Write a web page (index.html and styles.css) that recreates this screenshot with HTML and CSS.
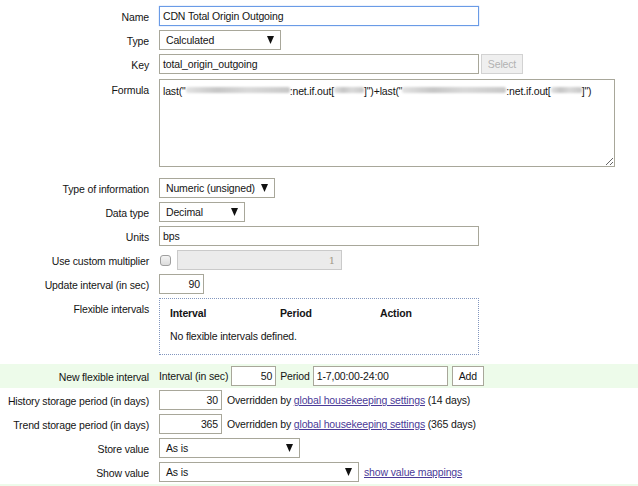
FILE: index.html
```html
<!DOCTYPE html>
<html>
<head>
<meta charset="utf-8">
<link rel="stylesheet" href="styles.css">
</head>
<body>
<form class="form">
  <div class="row">
    <div class="lbl">Name</div>
    <div class="field"><div class="input focus w320">CDN Total Origin Outgoing</div></div>
  </div>
  <div class="row">
    <div class="lbl">Type</div>
    <div class="field"><div class="select w122"><span>Calculated</span><svg class="arrow" width="7" height="8" viewBox="0 0 7 8"><polygon points="0,0 7,0 3.5,8" fill="#111"/></svg></div></div>
  </div>
  <div class="row">
    <div class="lbl">Key</div>
    <div class="field"><div class="input w320">total_origin_outgoing</div><div class="btn disabled">Select</div></div>
  </div>
  <div class="row row-formula">
    <div class="lbl">Formula</div>
    <div class="field"><div class="textarea">last("<span class="blur b106"></span>:net.if.out[<span class="blur b30"></span>]")+last("<span class="blur b106"></span>:net.if.out[<span class="blur b31"></span>]")</div></div>
  </div>
  <div class="row">
    <div class="lbl">Type of information</div>
    <div class="field"><div class="select w116"><span>Numeric (unsigned)</span><svg class="arrow" width="7" height="8" viewBox="0 0 7 8"><polygon points="0,0 7,0 3.5,8" fill="#111"/></svg></div></div>
  </div>
  <div class="row">
    <div class="lbl">Data type</div>
    <div class="field"><div class="select w86"><span>Decimal</span><svg class="arrow" width="7" height="8" viewBox="0 0 7 8"><polygon points="0,0 7,0 3.5,8" fill="#111"/></svg></div></div>
  </div>
  <div class="row">
    <div class="lbl">Units</div>
    <div class="field"><div class="input w320">bps</div></div>
  </div>
  <div class="row">
    <div class="lbl">Use custom multiplier</div>
    <div class="field"><span class="checkbox"></span><div class="input num inactive w165">1</div></div>
  </div>
  <div class="row">
    <div class="lbl">Update interval (in sec)</div>
    <div class="field"><div class="input num w45">90</div></div>
  </div>
  <div class="row row-flex">
    <div class="lbl">Flexible intervals</div>
    <div class="field">
      <div class="flexbox">
        <div class="fx-head"><span class="fx-col c1">Interval</span><span class="fx-col c2">Period</span><span class="fx-col">Action</span></div>
        <div class="fx-body">No flexible intervals defined.</div>
      </div>
    </div>
  </div>
  <div class="row green row-newflex">
    <div class="lbl">New flexible interval</div>
    <div class="field">
      <span class="txt">Interval (in sec)</span>
      <div class="input num w45 ml3">50</div>
      <span class="txt ml4">Period</span>
      <div class="input w135 ml3">1-7,00:00-24:00</div>
      <div class="btn ml4">Add</div>
    </div>
  </div>
  <div class="row">
    <div class="lbl">History storage period (in days)</div>
    <div class="field"><div class="input num w63">30</div><span class="txt ml5">Overridden by <a class="link">global housekeeping settings</a> (14 days)</span></div>
  </div>
  <div class="row">
    <div class="lbl">Trend storage period (in days)</div>
    <div class="field"><div class="input num w63">365</div><span class="txt ml5">Overridden by <a class="link">global housekeeping settings</a> (365 days)</span></div>
  </div>
  <div class="row">
    <div class="lbl">Store value</div>
    <div class="field"><div class="select w141"><span>As is</span><svg class="arrow" width="7" height="8" viewBox="0 0 7 8"><polygon points="0,0 7,0 3.5,8" fill="#111"/></svg></div></div>
  </div>
  <div class="row">
    <div class="lbl">Show value</div>
    <div class="field"><div class="select w200"><span>As is</span><svg class="arrow" width="7" height="8" viewBox="0 0 7 8"><polygon points="0,0 7,0 3.5,8" fill="#111"/></svg></div><a class="link ml5">show value mappings</a></div>
  </div>
  <div class="row green">
    <div class="lbl">&nbsp;</div>
    <div class="field"></div>
  </div>
</form>
</body>
</html>
```

FILE: styles.css
```css
html, body {
  margin: 0;
  padding: 0;
  background: #ffffff;
}
body {
  font-family: "Liberation Sans", Arial, sans-serif;
  font-size: 10.5px;
  letter-spacing: -0.15px;
  color: #141414;
}
.form {
  padding-top: 4px;
}
.row {
  display: flex;
  align-items: flex-start;
  padding: 2px 0;
}
.lbl {
  box-sizing: border-box;
  width: 149px;
  height: 20px;
  padding-top: 1px;
  flex: none;
  text-align: right;
  line-height: 20px;
  white-space: nowrap;
}
.field {
  margin-left: 10px;
  display: flex;
  align-items: center;
  min-height: 20px;
}
.input, .select, .btn {
  box-sizing: border-box;
  height: 20px;
  line-height: 19px;
  border: 1px solid #a8a79a;
  background: #fff;
  white-space: nowrap;
  overflow: hidden;
}
.input {
  padding: 0 3px;
}
.input.num {
  text-align: right;
}
.input.focus {
  border-color: #6a9be6;
  box-shadow: 0 0 1px 0 #8cb4f0;
}
.input.inactive {
  background: #ebebeb;
  border-color: #cacaca;
  color: #a29a88;
  font-family: "DejaVu Serif", serif;
  font-size: 10px;
  padding-right: 6px;
}
.select {
  display: flex;
  align-items: center;
  justify-content: space-between;
  padding: 0 6px 0 6px;
}
.select .arrow {
  flex: none;
  margin-left: 6px;
}
.btn {
  padding: 0 6px;
  text-align: center;
}
.btn.disabled {
  margin-left: 2px;
  width: 42px;
  border-color: #d2d2d2;
  background: #efefef;
  color: #b2b2b2;
  padding: 0;
}
.textarea {
  box-sizing: border-box;
  width: 456px;
  height: 88px;
  margin-top: 1px;
  border: 1px solid #a8a79a;
  padding: 3px 3px;
  line-height: 16px;
  white-space: nowrap;
  overflow: hidden;
  resize: both;
}
.row-formula {
  padding-bottom: 9px;
}
.row-formula .lbl {
  padding-top: 2px;
}
.blur {
  display: inline-block;
  height: 6px;
  vertical-align: 2px;
  background: linear-gradient(90deg, #e2e2e2, #c6c6c6 30%, #d9d9d9 60%, #c8c8c8);
  border-radius: 2px;
  filter: blur(0.8px);
}
.b106 { width: 104px; }
.b30 { width: 30px; }
.b31 { width: 31px; }
.checkbox {
  box-sizing: border-box;
  display: inline-block;
  width: 11px;
  height: 11px;
  margin-left: 1px;
  border: 1px solid #9f9f9f;
  border-radius: 3px;
  background: linear-gradient(#f4f4f4, #dcdcdc);
  margin-right: 6px;
}
.flexbox {
  box-sizing: border-box;
  width: 320px;
  height: 57px;
  border: 1px dotted #8296be;
  padding: 5px 10px 0 10px;
}
.fx-head {
  display: flex;
  height: 18px;
  line-height: 18px;
  font-weight: bold;
  margin-bottom: 5px;
}
.fx-col.c1 { width: 110px; flex: none; }
.fx-col.c2 { width: 100px; flex: none; }
.fx-body {
  line-height: 18px;
}
.row-newflex {
  margin-top: 7px;
}
.green {
  background: #edfbea;
}
.txt {
  line-height: 20px;
  white-space: nowrap;
}
.link {
  color: #4b3b98;
  text-decoration: underline;
  cursor: pointer;
}
.ml3 { margin-left: 3px; }
.ml4 { margin-left: 4px; }
.ml5 { margin-left: 5px; }
.ml6 { margin-left: 6px; }
.w320 { width: 320px; }
.w122 { width: 122px; }
.w116 { width: 116px; }
.w86 { width: 86px; }
.w165 { width: 165px; }
.w45 { width: 45px; }
.w135 { width: 135px; }
.w63 { width: 63px; }
.w141 { width: 141px; }
.w200 { width: 200px; }
```
